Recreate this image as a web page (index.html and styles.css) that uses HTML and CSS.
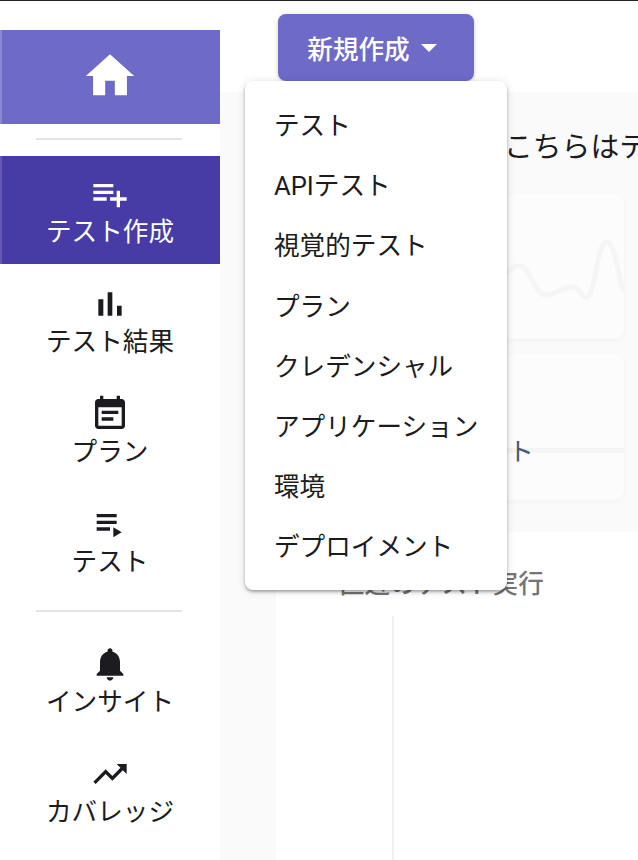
FILE: index.html
```html
<!DOCTYPE html>
<html lang="ja">
  <head>
    <meta charset="UTF-8" />
    <meta name="viewport" content="width=device-width, initial-scale=1.0" />
    <title>Dashboard</title>
    <link rel="stylesheet" href="styles.css">
  </head>
  <body>
    <div class="app">
      <nav class="sidebar">
        <a class="home">
          <svg class="home-icon" viewBox="0 0 24 24"><path d="M10 20v-6h4v6h5v-8h3L12 3 2 12h3v8z"></path></svg>
        </a>
        <div class="divider first"></div>
        <a class="nav-item active">
          <svg viewBox="0 0 24 24"><path d="M14 10H2v2h12v-2zm0-4H2v2h12V6zm4 8v-4h-2v4h-4v2h4v4h2v-4h4v-2h-4zM2 16h8v-2H2v2z"></path></svg>
          <span>テスト作成</span>
        </a>
        <a class="nav-item">
          <svg viewBox="0 0 24 24"><path d="M5 9.2h3V19H5zM10.6 5h2.8v14h-2.8zm5.6 8H19v6h-2.8z"></path></svg>
          <span>テスト結果</span>
        </a>
        <a class="nav-item">
          <svg viewBox="0 0 24 24"><path d="M17 10H7v2h10v-2zm2-7h-1V1h-2v2H8V1H6v2H5c-1.11 0-1.99.9-1.99 2L3 19c0 1.1.89 2 2 2h14c1.1 0 2-.9 2-2V5c0-1.1-.9-2-2-2zm0 16H5V8h14v11zm-5-5H7v2h7v-2z"></path></svg>
          <span>プラン</span>
        </a>
        <a class="nav-item">
          <svg viewBox="0 0 24 24"><path d="M4 10h12v2H4zm0-4h12v2H4zm0 8h8v2H4zm10 0v6l5-3z"></path></svg>
          <span>テスト</span>
        </a>
        <div class="divider second"></div>
        <a class="nav-item">
          <svg viewBox="0 0 24 24"><path d="M12 22c1.1 0 2-.9 2-2h-4c0 1.1.89 2 2 2zm6-6v-5c0-3.07-1.64-5.64-4.5-6.32V4c0-.83-.67-1.5-1.5-1.5s-1.5.67-1.5 1.5v.68C7.63 5.36 6 7.92 6 11v5l-2 2v1h16v-1l-2-2z"></path></svg>
          <span>インサイト</span>
        </a>
        <a class="nav-item">
          <svg viewBox="0 0 24 24"><path d="M16 6l2.29 2.29-4.88 4.88-4-4L2 16.59 3.41 18l6-6 4 4 6.3-6.29L22 12V6z"></path></svg>
          <span>カバレッジ</span>
        </a>
      </nav>
      <main class="main">
        <div class="topbar">
          <div class="create">
            <button class="create-btn">
              新規作成
              <svg viewBox="0 0 16 8"><path d="M0 0h16L8 8z"></path></svg>
            </button>
            <ul class="menu">
              <li>テスト</li>
              <li>APIテスト</li>
              <li>視覚的テスト</li>
              <li>プラン</li>
              <li>クレデンシャル</li>
              <li>アプリケーション</li>
              <li>環境</li>
              <li>デプロイメント</li>
            </ul>
          </div>
        </div>
        <div class="content">
          <h1 class="greeting">こちらはテストのダッシュボードです</h1>
          <div class="card chart-card">
            <svg viewBox="0 0 348 145" preserveAspectRatio="none">
              <path d="M200 110C215 100 232 70 244 72C254 73 258 100 269 101C278 102 286 93 296 93C304 93 306 105 311 103C320 100 320 48 331 48C340 48 342 86 348 98"></path>
            </svg>
          </div>
          <div class="card stat-card">
            <div class="stat-label">テスト</div>
          </div>
        </div>
        <section class="runs">
          <h2 class="runs-title">直近のテスト実行</h2>
          <div class="runs-body">
            <div class="runs-side"></div>
            <div class="runs-list"></div>
          </div>
        </section>
      </main>
    </div>
  </body>
</html>
```

FILE: styles.css
```css
* {
  margin: 0;
  padding: 0;
  box-sizing: border-box;
}
html,
body {
  height: 860px;
  overflow: hidden;
}
body {
  font-family: Roboto, "Noto Sans CJK JP", sans-serif;
  font-size: 25.6px;
  color: #1b1b20;
  background: #fff;
  border-top: 1px solid #222;
}
.app {
  display: flex;
  height: 859px;
}

/* sidebar */
.sidebar {
  flex: 0 0 220px;
  padding-top: 29px;
  background: #fff;
}
.home {
  display: flex;
  justify-content: center;
  height: 94px;
  padding: 17px 2px 0 0;
  background: #6e6ac8;
  border-left: 2px solid #8b88d4;
}
.home-icon {
  width: 58px;
  height: 58px;
  fill: #fff;
}
.divider {
  height: 2px;
  margin: 0 38px 0 36px;
  background: #e4e4e8;
}
.divider.first {
  margin-top: 14px;
  margin-bottom: 16px;
}
.divider.second {
  margin-top: 14px;
  margin-bottom: 14px;
}
.nav-item {
  display: flex;
  flex-direction: column;
  align-items: center;
  height: 110px;
  padding-top: 18px;
  line-height: 36px;
}
.nav-item svg {
  width: 40px;
  height: 40px;
  flex: none;
  fill: #1b1b20;
}
.nav-item.active {
  height: 108px;
  margin-bottom: 2px;
  padding-right: 2px;
  color: #fff;
  background: #473ba6;
  border-left: 2px solid #6358b5;
}
.nav-item.active svg {
  fill: #fff;
}

/* top bar + dropdown */
.main {
  flex: 1;
  min-width: 0;
  display: flex;
  flex-direction: column;
  background: #fafafa;
}
.topbar {
  flex: 0 0 91px;
  padding: 13px 0 0 58px;
  background: #fff;
}
.create {
  position: relative;
  width: 196px;
}
.create-btn {
  display: flex;
  align-items: center;
  justify-content: center;
  gap: 11px;
  width: 196px;
  height: 67px;
  padding-right: 8px;
  border: 0;
  border-radius: 8px;
  font: 500 25.6px Roboto, "Noto Sans CJK JP", sans-serif;
  color: #fff;
  background: #6e6ac8;
  box-shadow: 0 1px 4px rgba(0, 0, 0, 0.2);
}
.create-btn svg {
  width: 16px;
  height: 8px;
  fill: #fff;
}
.menu {
  position: absolute;
  top: 67px;
  left: -33px;
  width: 262px;
  padding: 14px 0 13px;
  list-style: none;
  background: #fff;
  border-radius: 8px;
  box-shadow: 0 2px 3px rgba(0, 0, 0, 0.3), 0 1px 10px rgba(0, 0, 0, 0.12);
  z-index: 5;
}
.menu li {
  height: 60.2px;
  padding-left: 29px;
  line-height: 62px;
  white-space: nowrap;
}

/* page behind the menu */
.content {
  flex: 0 0 440px;
  padding: 0 14px 0 56px;
  overflow: hidden;
  background: #fafafa;
}
.greeting {
  height: 102px;
  padding: 37px 0 0 228px;
  font-size: 28.8px;
  font-weight: 400;
  line-height: 37px;
  white-space: nowrap;
}
.card {
  background: #fcfcfc;
  border-radius: 10px;
  box-shadow: 0 2px 6px rgba(0, 0, 0, 0.03);
}
.chart-card {
  height: 145px;
  overflow: hidden;
}
.chart-card svg {
  display: block;
  width: 100%;
  height: 100%;
  fill: none;
  stroke: #f5f5f5;
  stroke-width: 5;
}
.stat-card {
  height: 146px;
  margin-top: 15px;
  padding: 86px 0 0 181px;
  background: linear-gradient(#fcfcfc 94px, #f4f4f4 94px, #f4f4f4 99px, #fcfcfc 99px);
}
.stat-label {
  line-height: 24px;
  color: #4e5871;
  white-space: nowrap;
}
.runs {
  flex: 1;
  margin-left: 56px;
  background: #fff;
}
.runs-title {
  padding: 36px 0 0 63px;
  height: 84px;
  font-size: 25.6px;
  font-weight: 500;
  line-height: 32px;
  color: #757575;
  white-space: nowrap;
}
.runs-body {
  display: flex;
  height: 244px;
}
.runs-side {
  flex: 0 0 118px;
  border-right: 2px solid #f0f0f0;
}
```
